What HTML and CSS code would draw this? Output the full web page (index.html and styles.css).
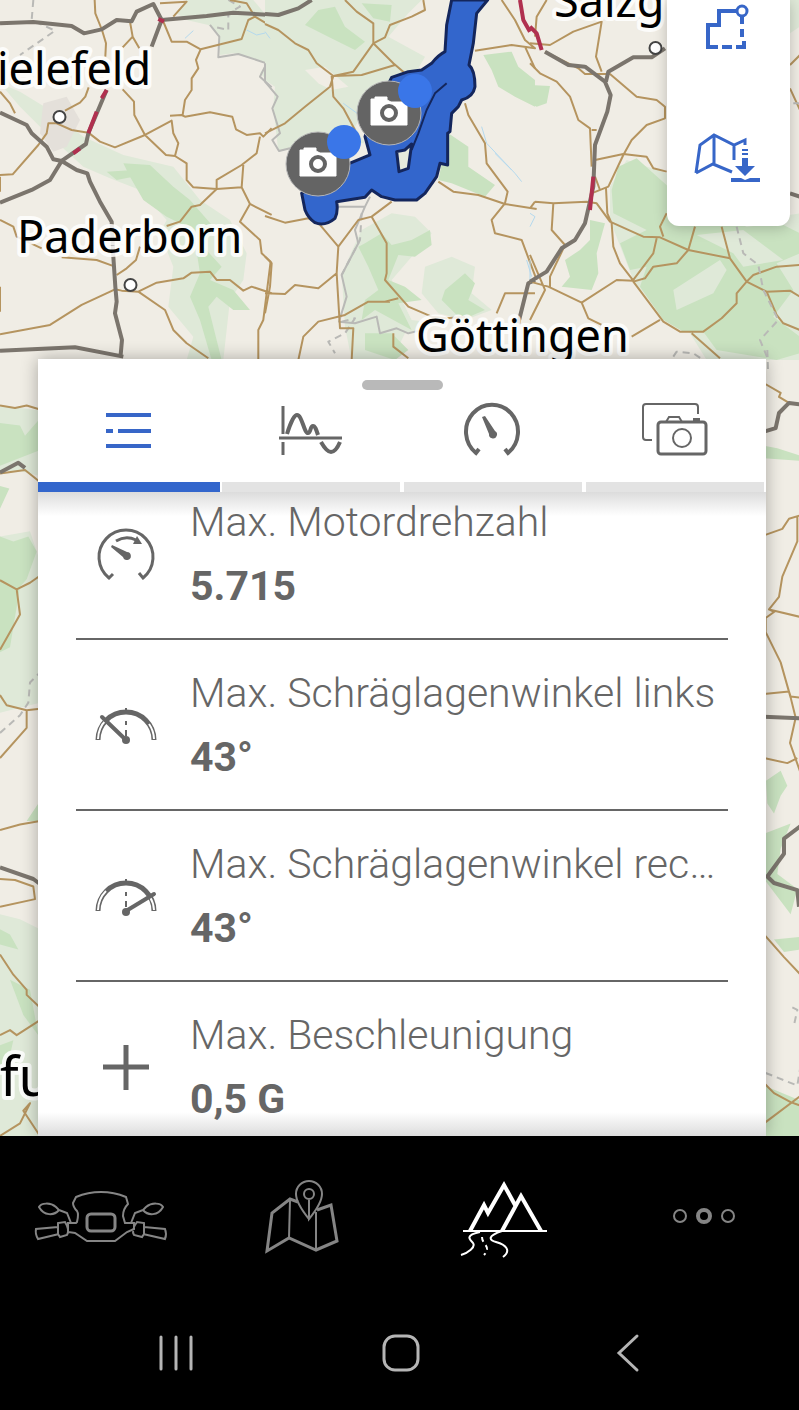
FILE: index.html
```html
<!DOCTYPE html>
<html lang="de">
<head>
<meta charset="utf-8">
<meta name="viewport" content="width=device-width, initial-scale=1">
<title>Fahrtdetails</title>
<link rel="stylesheet" href="styles.css">
</head>
<body>
<div class="app">
<main class="stage">
<svg class="map" viewBox="0 0 799 1136" preserveAspectRatio="xMidYMin slice" role="img" aria-label="Karte mit Route">
  <!-- west -->
  <g transform="scale(.3333)">
    <path class="wood-light" d="M0 250 60 275 150 330 250 410 370 465 520 500 600 600 690 660 740 760 730 840 690 900 670 1080 560 1080 580 1010 505 920 520 800 480 700 500 660 420 570 330 535 250 500 130 390 60 320ZM560 0 760 0 810 60 810 250 780 220 800 190 700 160 660 165 655 100 625 75 560 60 530 40Z"/>
    <path class="wood" d="M370 490 450 495 520 560 570 600 640 680 610 740 665 800 630 840 700 870 750 930 700 930 650 890 625 920 665 1080 635 1080 600 960 570 890 600 820 580 690 500 650 430 600 390 530ZM320 515 400 510 400 530 350 540Z"/>
    <path class="town" d="M130 310 200 290 240 360 200 440 160 455 120 400Z"/>
    <path class="border" d="M630 75 658 110 655 172 715 162 800 190 780 230 815 262"/>
    <path class="border dashed" d="M100 0 95 60 165 92 60 165M685 0 720 20 685 40 685 90 640 80"/>
    <path class="river" d="M555 115 580 92M740 90 770 105 800 98"/>
    <path class="road" d="M284 0 286 40 306 90 318 130 316 170M390 65 398 110 368 142M398 110 418 145M266 262 256 290 240 308 195 332M0 275 30 310 45 340M0 525 38 523 115 435 140 400 145 370 170 370 215 390 265 398 300 425 345 442 435 405 515 362 520 400 535 430 525 468 498 465 435 405 403 345 402 305 368 268M510 347 545 345 555 350 630 337 697 350 708 388 740 405 780 400 790 410 815 385M780 410 770 460 725 495 650 540 650 567 725 562 730 495M525 468 560 490 560 540 580 562 650 567 600 615 575 620 540 665 500 678M725 562 750 612 720 665 780 720 785 760 812 785 790 960 775 990 775 1080M750 612 815 645M548 345 555 300 575 270 575 235 595 205 588 180 602 148 560 125 515 125 488 60M602 148 725 117 745 60 765 50 815 80M480 10 560 5 520 50M690 0 740 10 765 50M0 660 40 680 50 710 125 745M185 772 290 780 345 800M420 740 408 780 380 805 350 825M0 1003 150 975 245 915 345 868 365 872 415 875 470 848 550 835 575 818 630 815 650 840 690 840 730 872 755 860 815 880M415 875 495 930 520 990 560 1030 625 1075M0 530 0 575M0 860 0 935"/>
    <path class="motorway" d="M0 70 100 66 215 78 252 100 305 88 350 60 395 64 410 35 460 12 485 60 620 48 700 38 815 45M485 60 455 140M0 338 80 375 95 400 140 440 160 478 185 483 258 432 265 400 320 270M185 483 150 540 95 570 0 608M185 483 230 510 262 520 270 545 300 605 335 665 340 770 346 860 350 905 345 940 366 1020 362 1065M0 1052 225 1042 370 1070"/>
    <path class="works" d="M320 270 305 295M290 335 265 400M475 57 492 65M220 460 240 445"/>
  </g>
  <!-- centre -->
  <g transform="translate(265 0) scale(.3333)">
    <path class="wood-light" d="M0 0 470 0 430 40 370 110 480 170 440 240 330 280 270 380 300 430 150 430 40 455 25 320 30 260 0 240ZM290 690 380 640 450 650 500 700 440 770 380 840 440 960 520 970 420 1000 380 1080 260 1080 240 980 230 820ZM480 800 560 770 630 800 620 880 680 930 600 960 520 940 470 880Z"/>
    <path class="wood" d="M160 30 210 20 240 80 300 125 270 150 190 110 120 75ZM290 10 380 15 375 65 325 55ZM655 165 740 155 760 200 810 240 810 320 750 290 700 260 680 210ZM550 400 610 440 610 500 690 555 660 590 560 550 520 540ZM300 730 350 700 380 735 440 720 495 690 500 735 450 770 400 765 370 840 420 860 470 900 400 910 440 990 330 930 290 960 300 900 340 870 310 800 280 740ZM540 870 600 820 630 850 610 900 660 930 590 960 530 900ZM300 1000 380 1000 430 1050 390 1080 300 1050Z"/>
    <path class="clearing" d="M120 210 180 200 250 260 200 270 160 250Z"/>
    <path class="river" d="M650 380 665 430 750 520 770 545M690 460 740 510M785 780 800 830M235 310 290 350M0 95 15 115"/>
    <path class="border" d="M0 190 0 245 38 290 22 325 45 400 22 420 42 453 75 445M205 620 300 620 315 590M300 620 270 690 280 730 230 825 245 890 222 965 270 970 335 950 345 1000 395 985 430 1000 470 990"/>
    <path class="border dashed" d="M290 640 285 720 230 825M230 965 270 955 240 1000 190 1025 210 1060"/>
    <path class="road" d="M240 0 275 35 325 70 325 130 385 190 420 220M325 130 360 112 375 75 440 50 480 30 475 0M325 130 265 215 205 228 155 190 130 150 90 130 40 90 0 72M205 228 290 225 390 195M205 228 195 260 120 320 60 370 0 400M200 228 205 290 235 325 270 390M710 0 750 60 780 120 810 145 740 135 630 152M780 140 810 205M600 310 610 345 660 430 665 490 728 575 720 610 680 660 690 700 770 720 815 840M520 545 565 575 640 585 720 612 815 627M0 648 60 668 130 655 165 675 220 740 215 820 160 865 90 855 60 882 0 880M220 740 280 660 320 650 380 605M320 650 365 730 365 820 360 840 430 920 500 950 545 955 600 950M400 895 360 905 310 905 240 945 160 965 115 1010 100 1080M215 820 225 985 265 985 260 1080M375 905 320 905M0 770 20 790 15 860 0 940M810 880 720 880 695 940M385 1000 385 1040 430 1075"/>
    <path class="motorway" d="M0 42 40 45 100 25 140 0M810 840 790 850 760 970"/>
    <path class="works" d="M765 0 775 60 795 95"/>
    <path class="track" d="M560 0 545 75 540 155Q520 165 500 190L470 210 430 215 380 232 320 350 300 410 315 465 230 500 110 580 120 630Q130 655 150 668Q180 680 210 655Q220 635 215 605L300 592 320 570 350 590 390 600 455 600 480 580 515 530 525 490 548 495 548 400 555 395 560 340 580 320 590 300Q625 290 630 260Q630 210 612 195L625 130 635 40 668 0Z"/>
    <path class="track-hole" d="M395 455 420 450 440 432 430 505 402 515Z"/>
    <path class="track-crease" d="M545 250 510 280 485 330 460 400 440 450"/>
  </g>
  <!-- east -->
  <g transform="translate(530 0) scale(.3333)">
    <path class="wood-light" d="M780 0 810 0 810 80 780 100ZM240 560 290 480 410 520 620 670 810 640 810 1080 530 1080 480 1000 380 930 310 840 240 660Z"/>
    <path class="wood" d="M0 255 60 258 50 310 20 320 0 310ZM265 500 320 475 370 520 460 600 650 680 750 670 810 700 810 760 740 790 790 870 730 950 810 1010 810 1060 740 1080 560 1050 520 995 460 995 400 960 330 860 350 800 300 810 270 730 350 690 250 640 245 570ZM180 660 225 670 200 760 205 820 185 870 95 860 120 830 105 780 150 750 180 720Z"/>
    <path class="wood-light" d="M430 870 570 780 590 810 550 880 440 930ZM500 705 640 690 760 780 640 800 610 760Z"/>
    <path class="river" d="M0 640 15 650 0 680M0 780 0 840"/>
    <path class="road" d="M50 0 20 50 15 110M0 130 60 135 130 95 215 65 198 170 215 215M0 190 30 220 80 245 120 290 145 360 180 385 185 500M45 155 145 205 165 222 240 222 320 290 380 300 405 320 405 355 350 375 305 420 280 465 235 560 190 578M185 390 200 390M195 480 280 462 350 470 370 505 410 515M195 530 210 570M228 565 232 640 245 670 250 740 270 790 310 842 260 840 155 908 55 860 0 845M15 605 70 610 170 605 200 610 240 665 340 710 390 712 475 750 600 775 650 845 620 880 620 910 575 955 520 995 450 995 400 965 310 845 345 835 370 800 440 790 475 750 495 680M70 610 65 690 105 735 60 830 60 865M380 715 370 760 310 840M15 605 0 625M0 765 45 870 0 960M155 908 175 955 215 975M305 1010 390 960M485 1000 570 1075M400 710 390 680 410 640M575 680 600 775M650 845 670 825 740 800 810 795M650 845 710 875 780 872 810 890M710 875 740 945 760 970 810 990M780 195 810 165M780 265 810 330"/>
    <path class="border dashed" d="M620 680 640 760 685 795 700 870 745 960 690 1020 715 1080M430 1070 440 1055 490 1060 520 1080M790 310 810 310"/>
    <path class="motorway" d="M45 155 115 195 165 200 225 245 242 285 232 335 195 435 190 560 165 670 135 720 95 745 50 815 0 845M228 245 235 215 310 172 365 172 405 145M780 580 810 590"/>
    <path class="works" d="M0 80 20 100 35 150M190 530 180 630"/>
  </g>
  <!-- strip left of the sheet -->
  <g transform="translate(0 350) scale(.3333 .5038)">
    <path class="wood-light" d="M0 110 120 120 120 250 60 240 0 240ZM0 370 90 360 120 420 120 700 60 710 0 720ZM0 1120 60 1130 120 1150 120 1570 0 1570Z"/>
    <path class="wood" d="M0 145 60 150 75 170 115 140 115 200 0 230ZM0 270 28 275 0 315ZM0 370 40 380 85 370 110 400 80 455 60 470 30 590 0 600ZM80 935 115 900 115 935ZM0 1150 30 1160 55 1190 0 1180ZM30 1250 90 1270 115 1360 70 1320ZM0 1380 40 1370 30 1400 0 1420Z"/>
    <path class="border dashed" d="M0 760 60 725 85 700 90 660 120 640"/>
    <path class="road" d="M0 110 45 115 80 110 120 118M0 245 75 238 120 262M0 457 50 475 60 525 0 595M50 475 90 462 120 448M0 685 20 705 80 715 120 712M80 715 80 750 0 810M0 953 60 942 120 935M0 1050 45 1052 100 1065 105 1090 0 1105M0 1200 40 1240 80 1270 80 1280 120 1305M0 1360 30 1350 50 1360 120 1330M0 1560 60 1535 90 1495 70 1510 120 1560"/>
    <path class="motorway" d="M0 243 55 224 75 234M0 1027 100 1050 120 1060"/>
  </g>
  <!-- strip right of the sheet -->
  <g transform="translate(754 350) scale(.3333 .5038)">
    <path class="wood" d="M30 190 70 195 140 210 135 220 30 215ZM36 855 80 835 100 865 80 885 60 920 40 900ZM30 960 110 940 80 990 70 1040 130 1070 110 1120 30 1050ZM60 1170 140 1165 140 1190 90 1195ZM30 1460 140 1490 140 1570 30 1570Z"/>
    <path class="border dashed" d="M40 0 42 40M115 1305 130 1310 120 1340M35 1435 130 1460 140 1420"/>
    <path class="road" d="M30 66 80 85 75 93 105 105M30 368 85 355 105 335 140 328M130 330 130 380 85 450 75 490 45 515 140 530M45 515 60 520 35 532 35 560 80 620 110 690 125 730 108 780 140 840M30 683 105 678 110 688 140 690M30 810 100 820 130 810M30 1160 90 1205 140 1240M30 1455 60 1475 110 1493 140 1500M30 1535 140 1480"/>
    <path class="motorway" d="M30 162 65 155 75 125 105 105 140 108M30 728 140 731M140 945 90 970 90 1000 40 1045 60 1058 130 1072 135 1105"/>
  </g>
  <g class="place">
    <circle cx="59.500" cy="117" r="6"/><circle cx="130.500" cy="285" r="6"/><circle cx="655.500" cy="48" r="6"/>
  </g>
  <g class="city">
    <text x="-3" y="85">ielefeld</text>
    <text x="17" y="253">Paderborn</text>
    <text x="554" y="17">Salzg</text>
    <text x="416" y="352">Göttingen</text>
    <text class="city-large" x="0" y="1096">fu</text>
  </g>
  <g>
    <circle class="pin" cx="389" cy="113" r="32"/>
    <path class="pin-camera" d="M371 102v-3h4v-2h12v3l4 2h16v23h-36Z"/>
    <circle class="pin-lens" cx="389" cy="113" r="7"/>
    <circle class="pin-dot" cx="415" cy="91" r="17"/>
  </g>
  <g>
    <circle class="pin" cx="318" cy="164" r="32"/>
    <path class="pin-camera" d="M300 153v-3h4v-2h12v3l4 2h16v23h-36Z"/>
    <circle class="pin-lens" cx="318" cy="164" r="7"/>
    <circle class="pin-dot" cx="344" cy="142" r="17"/>
  </g>
</svg>

<div class="map-tools">
  <button class="map-tool" type="button" aria-label="Route zuschneiden">
    <svg width="76" height="56" viewBox="-4 0 76 56"><path class="blue4" d="M43 11H24V25H13V47H23M27 47H37M41 47H49V41M47 37V29M47 24V16"/><circle class="blue3 on-white" cx="47" cy="11" r="5"/></svg>
  </button>
  <button class="map-tool" type="button" aria-label="Karte herunterladen">
    <svg width="76" height="56" viewBox="0 0 76 56"><path class="blue3" d="M5 43 9 15 23 5 43 15 54 10V15M5 43 22 34 41 42M23 5V34M43 15V30"/><path class="blue2" d="M51 20H57M51 24H57"/><path class="fill-blue" d="M51 28H57V36H64L54 46 44 36H51ZM40 48H50L54 50 59 48H69V52H40Z"/></svg>
  </button>
</div>

<section class="sheet">
  <div class="handle"></div>
  <nav class="tabs" aria-label="Ansichten">
    <button class="tab tab-active" type="button" aria-label="Übersicht">
      <svg width="68" height="60" viewBox="0 0 68 60"><path class="blue4" d="M11 13H56M11 29H18M23 29H56M11 44H56"/></svg>
    </button>
    <button class="tab" type="button" aria-label="Diagramm">
      <svg width="68" height="60" viewBox="0 0 68 60"><path class="grey3" d="M6 4V32M6 40V53M2 36H65"/><path class="grey4" d="M10 32C13 22 17 13 20 13C25 13 27 31 31 31C34 31 33 24 36 24C38 24 39 27 41 33M44 40C48 47 51 50 54 50C57 50 60 47 63 40"/></svg>
    </button>
    <button class="tab" type="button" aria-label="Fahrwerte">
      <svg width="68" height="60" viewBox="0 0 68 60"><path class="grey4" d="M20 47 17 51A26 27 0 1 1 49 51L46 47"/><path class="fill-grey" d="M23 15 26 14 36 29A4 4 0 1 1 30 32Z"/></svg>
    </button>
    <button class="tab" type="button" aria-label="Fotos">
      <svg width="68" height="60" viewBox="0 0 68 60"><path class="grey2" d="M11 38H5Q2 38 2 35V5Q2 2 5 2H54Q57 2 57 5V12M25 20 28 15H38L41 20"/><rect class="grey3" x="17" y="20" width="48" height="32" rx="3"/><circle class="grey2" cx="41" cy="36" r="9"/><path class="grey4" d="M52 18H59"/></svg>
    </button>
  </nav>
  <div class="viewport">
  <ul class="stats">
    <li class="stat">
      <svg class="stat-icon" width="64" height="64" viewBox="0 0 64 64"><path class="grey3" d="M19 52 15 56A27 27 0 1 1 49 56L45 51M22 19Q32 13 42 18"/><path class="fill-grey" d="M39 22 43 14 48 22ZM18 23 33 30A4 4 0 1 1 29 35L17 25Z"/></svg>
      <div class="stat-text"><span class="stat-label">Max. Motordrehzahl</span><strong class="stat-value">5.715</strong></div>
    </li>
    <li class="stat">
      <svg class="stat-icon" width="64" height="64" viewBox="0 0 64 64"><path class="arc" d="M4 47A28 28 0 0 1 60 47"/><path class="arc-open" d="M4 46A28 28 0 0 1 12 27M60 46A28 28 0 0 0 55 31"/><path class="grey2" d="M32 15V21M32 28V32M32 37V43"/><path class="lean" d="M8 24 32 47"/><circle class="fill-grey" cx="32" cy="47" r="4"/></svg>
      <div class="stat-text"><span class="stat-label">Max. Schräglagenwinkel links</span><strong class="stat-value">43°</strong></div>
    </li>
    <li class="stat">
      <svg class="stat-icon" width="64" height="64" viewBox="0 0 64 64"><path class="arc" d="M4 47A28 28 0 0 1 60 47"/><path class="arc-open" d="M4 46A28 28 0 0 1 12 27M60 46A28 28 0 0 0 56 33"/><path class="grey2" d="M32 15V21M32 28V32M32 37V43"/><path class="lean" d="M60 30 32 47"/><circle class="fill-grey" cx="32" cy="48" r="4"/></svg>
      <div class="stat-text"><span class="stat-label">Max. Schräglagenwinkel rechts</span><strong class="stat-value">43°</strong></div>
    </li>
    <li class="stat">
      <svg class="stat-icon" width="64" height="64" viewBox="0 0 64 64"><path class="plus" d="M32 10V55M9 32H55"/></svg>
      <div class="stat-text"><span class="stat-label">Max. Beschleunigung</span><strong class="stat-value">0,5 G</strong></div>
    </li>
  </ul>
  </div>
</section>
</main>

<nav class="app-nav" aria-label="Hauptnavigation">
  <button type="button" aria-label="Fahrzeug">
    <svg width="200" height="100" viewBox="0 -14 200 100"><path class="nav1" d="M77 42Q79 34 77 31Q73 27 73 23L76 17Q88 12 101 12Q114 12 126 17L128 24Q123 29 123 36L125 43H134V49L127 52 115 61H87L75 53 68 52V43H76ZM59 30C54 36 44 36 39 27C41 23 50 22 56 27ZM59 30 67 33 71 43M143 30C148 36 158 36 163 27C161 23 152 22 146 27ZM143 30 135 33 131 43M58 46V43L65 42Q70 50 67 55L60 57 58 54ZM58 47 36 49Q35 54 38 59L59 54M144 46V43L137 42Q131 50 134 55L142 57 144 54ZM144 47 165 49Q167 54 165 59L143 54"/><rect class="nav3" x="87" y="34" width="28" height="17" rx="4"/></svg>
  </button>
  <button type="button" aria-label="Karte">
    <svg width="200" height="100" viewBox="0 -14 200 100"><path class="nav3" d="M98 22 90 19 72 33 67 71 89 58 116 70 137 61 131 25 117 30"/><path class="nav1" d="M90 20 89 58M116 32V70M109 39Q96 23 96 14A13 13 0 0 1 122 14Q122 23 109 39V20"/><circle class="nav2" cx="109" cy="14" r="5"/></svg>
  </button>
  <button class="nav-active" type="button" aria-label="Fahrten">
    <svg width="200" height="100" viewBox="0 -14 200 100"><path class="nav4" d="M70 51 84 25 88 33 104 5 115 25M102 51 121 16 141 51"/><path class="nav2" d="M63 51H147"/><path class="nav1" d="M80 52C64 55 70 60 73 63C76 67 68 73 61 75M102 51C87 56 89 60 96 62C107 65 111 71 103 77"/><path class="nav1 dash" d="M82 57C82 65 92 66 84 75"/></svg>
  </button>
  <button type="button" aria-label="Mehr">
    <svg width="200" height="100" viewBox="0 -14 200 100"><circle class="nav2" cx="80" cy="36" r="6"/><circle class="nav4" cx="104" cy="36" r="6"/><circle class="nav2" cx="128" cy="36" r="6"/></svg>
  </button>
</nav>
<nav class="system-nav" aria-label="System">
  <button type="button" aria-label="Letzte Apps"><svg width="44" height="44" viewBox="0 0 44 44"><path class="sys" d="M7 6V38M22 6V38M37 6V38"/></svg></button>
  <button type="button" aria-label="Startseite"><svg width="44" height="44" viewBox="0 0 44 44"><rect class="sys" x="6" y="5" width="34" height="34" rx="11"/></svg></button>
  <button type="button" aria-label="Zurück"><svg width="44" height="44" viewBox="0 0 44 44"><path class="sys" d="M34 5 16 22 34 39"/></svg></button>
</nav>
</div>
</body>
</html>
```
FILE: styles.css
```css
* { box-sizing: border-box; }
body { margin: 0; background: #000; font-family: Roboto, "Liberation Sans", sans-serif; }
button { padding: 0; border: 0; background: none; display: flex; align-items: center; justify-content: center; cursor: pointer; }
svg { display: block; fill: none; }

.app { display: flex; flex-direction: column; min-height: 100vh; }
.stage { position: relative; flex: 1; padding: 359px 33px 0 38px; overflow: hidden; background: #f0ede5; }

/* map */
.map { position: absolute; inset: 0; width: 100%; height: 100%; }
.map path { vector-effect: non-scaling-stroke; stroke-linejoin: round; }
.wood-light { fill: #dfe9d8; }
.wood { fill: #c9e2c0; }
.town { fill: #e4e0da; }
.clearing { fill: #f0ede5; }
.road { stroke: #b5945f; stroke-width: 2; }
.motorway { stroke: #7b756d; stroke-width: 4; }
.works { stroke: #b0304f; stroke-width: 4; }
.border { stroke: #b9b9b6; stroke-width: 2; }
.dashed { stroke-dasharray: 7 5; }
.river { stroke: #b4d9ee; stroke-width: 1; }
.track { fill: #3366cc; stroke: #14265c; stroke-width: 3; }
.track-hole { fill: #e6ebdc; stroke: #14265c; stroke-width: 3; }
.track-crease { stroke: #14265c; stroke-width: 2; }
.place circle { fill: #fff; stroke: #444; stroke-width: 2; }
.city { font-family: "Noto Sans", "Open Sans", sans-serif; font-size: 45px; fill: #000; stroke: #fff; stroke-opacity: .85; stroke-width: 8px; stroke-linejoin: round; paint-order: stroke; }
.city-large { font-size: 54px; }
.pin { fill: #646464; stroke: #b5b5b5; stroke-width: 1; }
.pin-camera { fill: #fff; stroke: #fff; stroke-width: 1; }
.pin-lens { fill: #fff; stroke: #646464; stroke-width: 4; }
.pin-dot { fill: #3a76e8; }

.map-tools { position: absolute; top: 0; right: 9px; width: 123px; padding-bottom: 40px; display: flex; flex-direction: column; align-items: center; gap: 74px; background: #fff; border-radius: 0 0 12px 12px; box-shadow: 0 2px 14px rgba(0, 0, 0, .22); }

/* icon strokes */
.blue4 { stroke: #3766c8; stroke-width: 4; }
.blue3 { stroke: #3766c8; stroke-width: 3; }
.blue2 { stroke: #3766c8; stroke-width: 2; }
.fill-blue { fill: #3766c8; }
.on-white { fill: #fff; }
.grey4 { stroke: #666; stroke-width: 4; }
.grey3 { stroke: #666; stroke-width: 3; }
.grey2 { stroke: #666; stroke-width: 2; }
.fill-grey { fill: #666; }
.arc { stroke: #666; stroke-width: 5; }
.arc-open { stroke: #fff; stroke-width: 2; }
.lean { stroke: #666; stroke-width: 4; stroke-linecap: round; }
.plus { stroke: #666; stroke-width: 5; }

/* sheet */
.sheet { position: relative; padding-top: 21px; background: #fff; box-shadow: 0 0 16px rgba(0, 0, 0, .3); }
.handle { width: 81px; height: 10px; margin: 0 auto; border-radius: 5px; background: #b9b9b9; }
.tabs { display: grid; grid-template-columns: repeat(4, 1fr); }
.tab { height: 102px; margin: 0 2px; padding-bottom: 9px; border-bottom: 10px solid #e3e3e3; }
.tab-active { margin: 0; border-color: #3366cc; }
.viewport { position: relative; overflow: hidden; }
.viewport::before, .viewport::after { content: ""; position: absolute; left: 0; right: 0; height: 24px; }
.viewport::before { top: 0; z-index: 0; background: linear-gradient(#dcdcdc, rgba(255, 255, 255, 0)); }
.viewport::after { bottom: 0; background: linear-gradient(rgba(255, 255, 255, 0), #dcdcdc); }
.stats { position: relative; z-index: 1; list-style: none; margin: -23px 38px 0; padding: 0; }
.stat { display: flex; align-items: center; gap: 32px; padding: 21px 0 20px 18px; border-bottom: 2px solid #666; }
.stat:last-child { padding-bottom: 5px; border-bottom: 0; }
.stat-icon { flex: none; }
.stat-text { flex: 1; min-width: 0; display: flex; flex-direction: column; color: #666; font-size: 41px; line-height: 64px; }
.stat-label { font-weight: 300; white-space: nowrap; overflow: hidden; text-overflow: ellipsis; }
.stat-value { font-weight: 700; }

/* bottom bars */
.app-nav { display: grid; grid-template-columns: repeat(4, 1fr); height: 160px; color: #858585; }
.app-nav button { color: inherit; }
.app-nav .nav-active { color: #fff; }
.nav1, .nav2 { stroke: currentColor; stroke-width: 2; }
.nav3 { stroke: currentColor; stroke-width: 3; }
.nav4 { stroke: currentColor; stroke-width: 4; }
.dash { stroke-dasharray: 5 4; }
.system-nav { display: grid; grid-template-columns: repeat(3, 1fr); height: 114px; padding: 0 62px 0 64px; }
.sys { stroke: #b5b5b5; stroke-width: 3; stroke-linecap: round; }
```
